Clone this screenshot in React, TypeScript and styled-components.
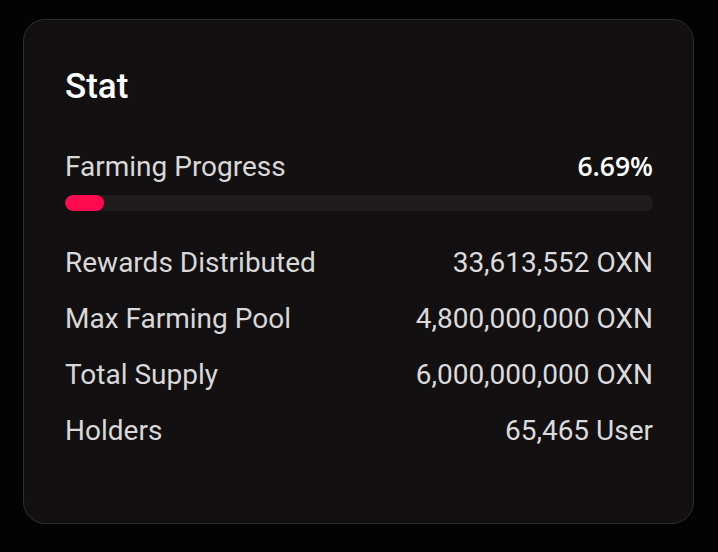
import React from 'react';
import styled, { createGlobalStyle } from 'styled-components';

const GlobalStyle = createGlobalStyle`
  html, body {
    margin: 0;
    padding: 0;
    background: #030303;
  }
  body {
    font-family: Roboto, "Noto Sans", sans-serif;
  }
`;

const Page = styled.div`
  width: 718px;
  height: 552px;
  box-sizing: border-box;
  padding: 19px 24px 28px 23px;
`;

const Card = styled.section`
  box-sizing: border-box;
  height: 100%;
  background: #121011;
  border: 1.5px solid #2e2c2d;
  border-radius: 22px;
  padding: 47px 40px 0 41px;
`;

const Title = styled.h2`
  margin: 0;
  font-size: 35px;
  font-weight: 500;
  line-height: 40px;
  color: #ffffff;
`;

const ProgressHead = styled.div`
  display: flex;
  justify-content: space-between;
  align-items: baseline;
  margin-top: 43px;
`;

const Label = styled.span`
  font-size: 28px;
  line-height: 32px;
  color: #d9d7d8;
`;

const Percent = styled.span`
  font-family: "Open Sans", "Noto Sans", sans-serif;
  font-size: 26.5px;
  font-weight: 600;
  line-height: 32px;
  color: #ffffff;
`;

const Track = styled.div`
  height: 16px;
  margin-top: 12px;
  border-radius: 8px;
  background: #1e1c1d;
  overflow: hidden;
`;

const Fill = styled.div`
  height: 100%;
  border-radius: 8px;
  background: #ff0a4f;
`;

const List = styled.div`
  display: flex;
  flex-direction: column;
  gap: 24px;
  margin-top: 36px;
`;

const Row = styled.div`
  display: flex;
  justify-content: space-between;
  align-items: baseline;
`;

const Value = styled(Label)`
  color: #dcdadb;
`;

const rows = [
  ['Rewards Distributed', '33,613,552 OXN'],
  ['Max Farming Pool', '4,800,000,000 OXN'],
  ['Total Supply', '6,000,000,000 OXN'],
  ['Holders', '65,465 User'],
];

export default function App() {
  const progress = 6.69;
  return (
    <Page>
      <GlobalStyle />
      <Card>
        <Title>Stat</Title>
        <ProgressHead>
          <Label>Farming Progress</Label>
          <Percent>{progress}%</Percent>
        </ProgressHead>
        <Track>
          <Fill style={{ width: `${progress}%` }} />
        </Track>
        <List>
          {rows.map(([k, v]) => (
            <Row key={k}>
              <Label>{k}</Label>
              <Value>{v}</Value>
            </Row>
          ))}
        </List>
      </Card>
    </Page>
  );
}
